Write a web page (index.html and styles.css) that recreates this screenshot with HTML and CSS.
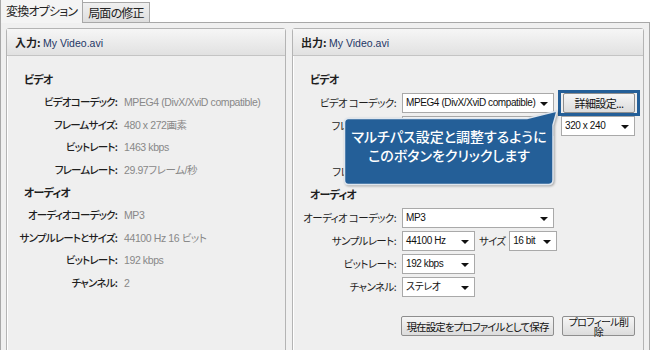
FILE: index.html
```html
<!DOCTYPE html>
<html>

<head>
    <title>変換オプション</title>
    <meta charset="UTF-8">
    <link rel="stylesheet" href="styles.css">
</head>

<body>
    <div class="tabs">
        <div class="tab active">変換オプション</div>
        <div class="tab">局面の修正</div>
    </div>

    <div class="frame">
        <div class="panel">
            <div class="panel-head"><strong>入力:</strong> <span class="file">My Video.avi</span></div>
            <div class="panel-body info">
                <div class="section">ビデオ</div>
                <div class="row"><span class="label">ビデオコーデック:</span><span class="value">MPEG4 (DivX/XviD compatible)</span></div>
                <div class="row"><span class="label">フレームサイズ:</span><span class="value">480 x 272画素</span></div>
                <div class="row"><span class="label">ビットレート:</span><span class="value">1463 kbps</span></div>
                <div class="row"><span class="label">フレームレート:</span><span class="value">29.97フレーム/秒</span></div>
                <div class="section">オーディオ</div>
                <div class="row"><span class="label">オーディオコーデック:</span><span class="value">MP3</span></div>
                <div class="row"><span class="label">サンプルレートとサイズ:</span><span class="value">44100 Hz 16 ビット</span></div>
                <div class="row"><span class="label">ビットレート:</span><span class="value">192 kbps</span></div>
                <div class="row"><span class="label">チャンネル:</span><span class="value">2</span></div>
            </div>
        </div>

        <div class="panel output">
            <div class="panel-head"><strong>出力:</strong> <span class="file">My Video.avi</span></div>
            <div class="panel-body settings">
                <div class="section">ビデオ</div>
                <div class="row">
                    <span class="label">ビデオ コーデック:</span>
                    <div class="select wide">MPEG4 (DivX/XviD compatible)</div>
                    <div class="highlight"><button class="btn details">詳細設定...</button></div>
                </div>
                <div class="row">
                    <span class="label">フレームサイズ:</span>
                    <div class="select wide">MPEG4</div>
                    <div class="select small">320 x 240</div>
                </div>
                <div class="row">
                    <span class="label">ビットレート:</span>
                    <div class="select mid">1463 kbps</div>
                </div>
                <div class="row">
                    <span class="label">フレームレート:</span>
                    <div class="select mid">29.97</div>
                </div>
                <div class="section">オーディオ</div>
                <div class="row">
                    <span class="label">オーディオ コーデック:</span>
                    <div class="select wide">MP3</div>
                </div>
                <div class="row">
                    <span class="label">サンプルレート:</span>
                    <div class="select mid">44100 Hz</div>
                    <span class="inline-label">サイズ</span>
                    <div class="select tiny">16 bit</div>
                </div>
                <div class="row">
                    <span class="label">ビットレート:</span>
                    <div class="select mid">192 kbps</div>
                </div>
                <div class="row">
                    <span class="label">チャンネル:</span>
                    <div class="select mid">ステレオ</div>
                </div>
                <div class="actions">
                    <button class="btn save">現在設定をプロファイルとして保存</button>
                    <button class="btn remove">プロフィール削<br>除</button>
                </div>
            </div>

            <div class="callout">
                <svg class="callout-shape" width="224" height="80" viewBox="0 0 224 80">
                    <path d="M5.5 9.5 H184 L214 2 L210 16 V71 Q210 75.5 205.5 75.5 H5.5 Q1.5 75.5 1.5 71 V14 Q1.5 9.5 5.5 9.5 Z"
                        fill="#245f98" stroke="#dfe6ee" stroke-width="1.5" />
                </svg>
                <div class="callout-text">マルチパス設定と調整するように<br>このボタンをクリックします</div>
            </div>
        </div>
    </div>
</body>

</html>
```

FILE: styles.css
```css
body {
    font-family: "Noto Sans CJK JP", "Liberation Sans", sans-serif;
    font-size: 10.5px;
    font-feature-settings: "palt";
    letter-spacing: -0.8px;
    width: 650px;
    height: 350px;
    margin: 0;
    padding: 0;
    background-color: #fff;
    color: #1e1e1e;
    overflow: hidden;
    white-space: nowrap;
}

/* Tabs */

.tabs {
    display: flex;
    height: 22px;
    align-items: flex-end;
    padding-left: 1px;
}

.tab {
    height: 19px;
    line-height: 19px;
    padding: 0 5px;
    border: 1px solid #a8a8a8;
    border-bottom: none;
    background: linear-gradient(#f0f0f0, #dedede);
    color: #222;
    font-size: 12px;
    letter-spacing: -0.8px;
    margin-left: -1px;
}

.tab.active {
    line-height: 22px;
    background-color: #f4f4f4;
    background-image: none;
    position: relative;
    z-index: 2;
    margin-bottom: -1px;
    height: 23px;
}

.frame {
    height: 326px;
    border: 1px solid #a8a8a8;
    background-color: #f0f0f0;
    padding: 5px;
    display: flex;
    gap: 6px;
}

/* Panels */

.panel {
    border: 1px solid #b4b4b4;
    border-radius: 3px;
    background-color: #efefef;
    box-shadow: inset 1px 1px 0 #fff;
    display: flex;
    flex-direction: column;
}

.panel:first-child {
    width: 278px;
}

.panel.output {
    width: 350px;
    position: relative;
}

.panel-head {
    height: 26px;
    line-height: 26px;
    padding-left: 8px;
    background: linear-gradient(#f6f6f6, #e1e1e1);
    border-bottom: 1px solid #c4c4c4;
    font-size: 11px;
    letter-spacing: 0;
}

.panel-head strong {
    font-weight: bold;
}

.file {
    color: #1f3766;
    font-family: "Liberation Sans", sans-serif;
    font-size: 10.5px;
}

.panel-body {
    padding: 12px 0 0 0;
}

.section {
    font-weight: bold;
    font-size: 11px;
    padding-left: 17px;
    height: 23px;
    line-height: 23px;
}

/* Input info */

.info .row {
    display: flex;
    height: 22.5px;
    line-height: 22.5px;
}

.info .label {
    width: 110px;
    text-align: right;
    font-weight: 500;
}

.info .value {
    padding-left: 7px;
    color: #888;
    font-family: "Liberation Sans", "Noto Sans CJK JP", sans-serif;
    font-size: 10.5px;
    letter-spacing: -0.4px;
}

/* Output settings */

.settings .row {
    display: flex;
    align-items: center;
    height: 23px;
}

.settings .label {
    width: 103px;
    text-align: right;
    padding-right: 6px;
    letter-spacing: -0.6px;
}

.select {
    box-sizing: border-box;
    height: 20px;
    line-height: 18px;
    border: 1px solid #a9a9a9;
    background-color: #fff;
    padding-left: 3px;
    font-family: "Liberation Sans", "Noto Sans CJK JP", sans-serif;
    font-size: 10px;
    letter-spacing: -0.4px;
    color: #111;
    position: relative;
    overflow: hidden;
}

.select::after {
    content: "";
    position: absolute;
    right: 5px;
    top: 8px;
    border-left: 4px solid transparent;
    border-right: 4px solid transparent;
    border-top: 4px solid #111;
}

.select.wide {
    width: 152px;
}

.select.mid {
    width: 73px;
}

.select.tiny {
    width: 48px;
}

.select.small {
    width: 74px;
    margin-left: 7px;
}

.inline-label {
    padding: 0 4px;
}

.btn {
    font-family: "Noto Sans CJK JP", sans-serif;
    font-feature-settings: "palt";
    font-size: 11px;
    letter-spacing: -0.6px;
    color: #111;
    border: 1px solid #8e8e8e;
    border-radius: 2px;
    background: linear-gradient(#f6f6f6, #dcdcdc);
    padding: 0;
    box-sizing: border-box;
    height: 20px;
    white-space: nowrap;
}

.highlight {
    margin-left: 4px;
    border: 3px solid #245f98;
    padding: 0 2px;
    background-color: #efefef;
}

.btn.details {
    width: 72px;
    line-height: 16px;
}

.actions {
    display: flex;
    gap: 8px;
    padding-left: 108px;
    margin-top: 18px;
}

.btn.save {
    width: 153px;
    font-size: 10.5px;
    letter-spacing: -0.9px;
}

.btn.remove {
    width: 73px;
    line-height: 9.5px;
    font-size: 10px;
    padding-bottom: 1px;
    overflow: visible;
    white-space: normal;
}

/* Callout overlay */

.callout {
    position: absolute;
    left: 50px;
    top: 80px;
    width: 224px;
    height: 80px;
}

.callout-shape {
    display: block;
    filter: drop-shadow(1px 1px 1px rgba(0, 0, 0, 0.3));
}

.callout-text {
    position: absolute;
    left: 0;
    top: 18px;
    width: 212px;
    text-align: center;
    color: #fff;
    font-size: 14px;
    font-weight: 500;
    line-height: 19px;
    letter-spacing: 0;
}
```
